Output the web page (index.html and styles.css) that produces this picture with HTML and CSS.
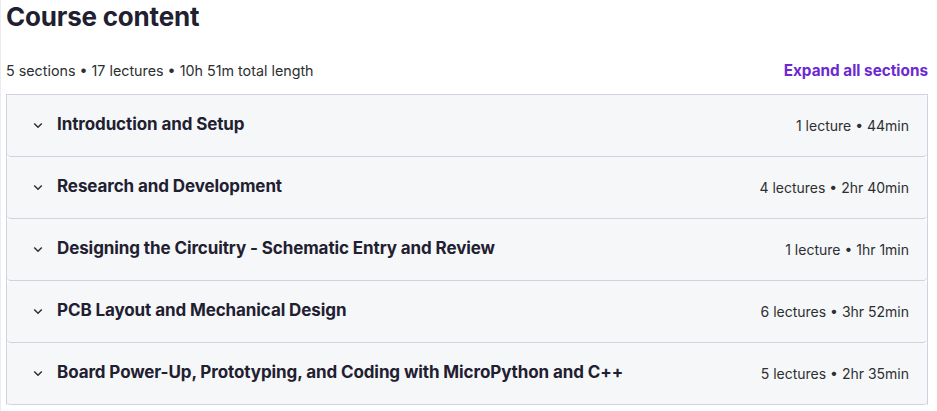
FILE: index.html
```html
<!DOCTYPE html>
<html lang="en">
  <head>
    <meta charset="UTF-8" />
    <meta name="viewport" content="width=device-width, initial-scale=1.0" />
    <title>Course content</title>
    <link rel="stylesheet" href="styles.css">
  </head>
  <body>
    <div class="curriculum">
      <h2 class="curriculum-title">Course content</h2>
      <div class="curriculum-meta">
        <span>5 sections • 17 lectures • 10h 51m total length</span>
        <button class="expand-btn">Expand all sections</button>
      </div>
      <div class="sections">
        <div class="section">
          <svg class="chevron" viewBox="0 0 24 24"><path d="M7 10l5 5 5-5"/></svg>
          <span class="section-title">Introduction and Setup</span>
          <span class="section-info">1 lecture • 44min</span>
        </div>
        <div class="section">
          <svg class="chevron" viewBox="0 0 24 24"><path d="M7 10l5 5 5-5"/></svg>
          <span class="section-title">Research and Development</span>
          <span class="section-info">4 lectures • 2hr 40min</span>
        </div>
        <div class="section">
          <svg class="chevron" viewBox="0 0 24 24"><path d="M7 10l5 5 5-5"/></svg>
          <span class="section-title">Designing the Circuitry - Schematic Entry and Review</span>
          <span class="section-info">1 lecture • 1hr 1min</span>
        </div>
        <div class="section">
          <svg class="chevron" viewBox="0 0 24 24"><path d="M7 10l5 5 5-5"/></svg>
          <span class="section-title">PCB Layout and Mechanical Design</span>
          <span class="section-info">6 lectures • 3hr 52min</span>
        </div>
        <div class="section">
          <svg class="chevron" viewBox="0 0 24 24"><path d="M7 10l5 5 5-5"/></svg>
          <span class="section-title">Board Power-Up, Prototyping, and Coding with MicroPython and C++</span>
          <span class="section-info">5 lectures • 2hr 35min</span>
        </div>
      </div>
    </div>
  </body>
</html>
```
FILE: styles.css
```css
* {
  box-sizing: border-box;
  margin: 0;
  padding: 0;
}

body {
  font-family: Inter, "Noto Sans", sans-serif;
  color: #2d2f31;
  background: white;
  border-left: 1px solid #ececf0;
  min-height: 100vh;
}

.curriculum {
  padding: 0 9px 0 5px;
}

.curriculum-title {
  font-size: 26px;
  font-weight: 700;
  line-height: 34px;
  letter-spacing: -0.2px;
  color: #1f2030;
}

/* META ROW */

.curriculum-meta {
  display: flex;
  justify-content: space-between;
  align-items: center;
  margin-top: 22px;
  height: 38px;
  padding-bottom: 10px;
  font-size: 14.3px;
}

.expand-btn {
  border: none;
  background: none;
  font-family: inherit;
  font-size: 15.3px;
  font-weight: 700;
  color: #6d28d2;
  cursor: pointer;
}

/* SECTIONS */

.sections {
  border: 1px solid #d1d2e0;
  border-bottom: none;
}

.section {
  display: flex;
  align-items: center;
  height: 62px;
  padding: 0 18px 0 22px;
  background-color: #f6f7f9;
  border-bottom: 1px solid #d1d2e0;
  border-radius: 4px;
}

.chevron {
  width: 18px;
  height: 18px;
  fill: none;
  stroke: #2d2f31;
  stroke-width: 2;
  margin-right: 10px;
  margin-bottom: 2px;
  flex-shrink: 0;
}

.section-title {
  font-size: 17px;
  font-weight: 700;
  flex: 1;
  letter-spacing: -0.1px;
  padding-bottom: 3px;
  color: #1f2030;
}

.section-info {
  font-size: 14px;
  color: #2d2f31;
}
```
